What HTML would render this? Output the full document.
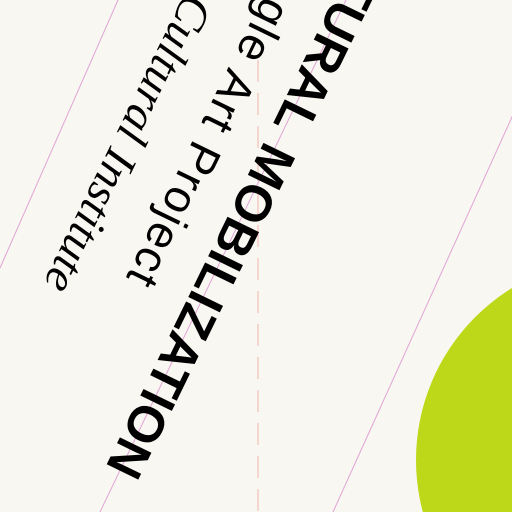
<!DOCTYPE html>
<html><head><meta charset="utf-8">
<style>
html,body{margin:0;padding:0;width:512px;height:512px;overflow:hidden;}
body{background:#f8f7f1;}
#w{position:relative;width:512px;height:512px;overflow:hidden;}
.t{position:absolute;width:1400px;white-space:nowrap;text-align:right;transform-origin:100% 50%;transform:rotate(116deg);color:#000;}
</style></head>
<body><div id="w">
<svg width="512" height="512" style="position:absolute;left:0;top:0">
  <line x1="118" y1="0" x2="0" y2="268" stroke="#e2a3d6" stroke-width="1"/>
  <line x1="346" y1="0" x2="100" y2="512" stroke="#e2a3d6" stroke-width="1"/>
  <line x1="565" y1="0" x2="333" y2="512" stroke="#e2a3d6" stroke-width="1"/>
  <line x1="258" y1="60" x2="258" y2="512" stroke="#f2b4aa" stroke-width="1" stroke-dasharray="22 11"/>
  <circle cx="618" cy="460" r="202" fill="#bcd818"/>
</svg>
<div class="t" style="left:-1275px;top:452px;height:50px;line-height:50px;font:bold 51px 'Liberation Sans',sans-serif;letter-spacing:0px;word-spacing:4px;">CULTURAL MOBILIZATION</div>
<div class="t" style="left:-1257px;top:265px;height:46px;line-height:46px;font:46px 'Liberation Sans',sans-serif;letter-spacing:2px;">Google Art Project</div>
<div class="t" style="left:-1340px;top:269px;height:46px;line-height:46px;font:italic 47px 'Liberation Serif',serif;letter-spacing:0px;">Cultural Institute</div>
</div></body></html>
